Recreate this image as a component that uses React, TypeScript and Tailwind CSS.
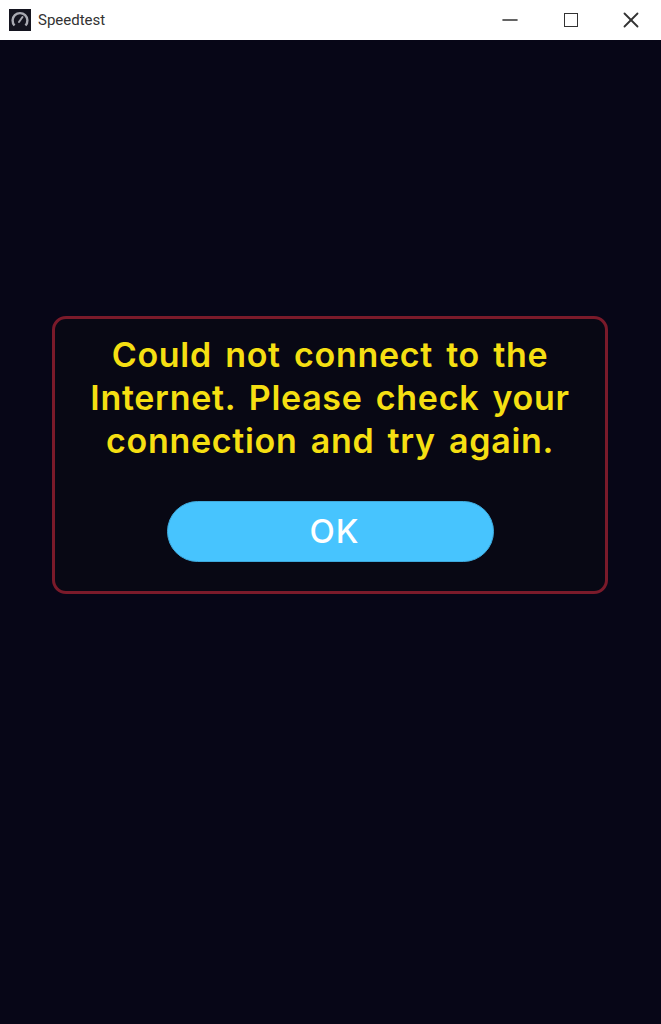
import { Minus, X } from "lucide-react";

function SpeedtestIcon() {
  return (
    <div className="h-[22px] w-[22px] bg-[#14141f]">
      <svg viewBox="0 0 22 22" className="h-[22px] w-[22px]" fill="none">
        <path
          d="M5.5 16.5a7.4 7.4 0 1 1 11 0"
          stroke="#a9aab2"
          strokeWidth="2.4"
          strokeLinecap="butt"
        />
        <path d="M10 13l3.5-5" stroke="#a9aab2" strokeWidth="2" strokeLinecap="round" />
      </svg>
    </div>
  );
}

export default function App() {
  return (
    <div className="flex h-[1024px] w-[661px] flex-col overflow-hidden bg-[#070617] font-['Inter',sans-serif]">
      {/* title bar */}
      <div className="flex h-[40px] items-center justify-between bg-white pl-[9px]">
        <div className="flex items-center gap-[7px]">
          <SpeedtestIcon />
          <span className="font-['Roboto',sans-serif] text-[15px] text-[#333]">Speedtest</span>
        </div>
        <div className="flex items-center">
          <div className="flex w-[61px] justify-center">
            <Minus className="h-[24px] w-[24px] text-[#333]" strokeWidth={1.6} absoluteStrokeWidth />
          </div>
          <div className="flex w-[61px] justify-center">
            <div className="h-[14px] w-[14px] border-[1.6px] border-[#333]" />
          </div>
          <div className="flex w-[60px] justify-center">
            <X className="h-[26px] w-[26px] text-[#333]" strokeWidth={1.7} absoluteStrokeWidth />
          </div>
        </div>
      </div>

      {/* error dialog */}
      <div className="pl-[52px] pt-[276px]">
        <div className="flex h-[278px] w-[556px] flex-col items-center rounded-[14px] border-[3px] border-[#7a1a2a] bg-[#080814] pt-[14px]">
          <p className="w-[530px] text-center text-[34px] leading-[43px] font-semibold tracking-[0.7px] [word-spacing:4px] text-[#f5df12]">
            Could not connect to the
            <br />
            Internet. Please check your
            <br />
            connection and try again.
          </p>
          <button className="mt-[39px] flex h-[61px] w-[327px] items-center justify-center rounded-full border border-[#3ea9dc] bg-[#47c4fe] pl-[9px] text-[33px] font-medium tracking-[1px] text-white">
            OK
          </button>
        </div>
      </div>
    </div>
  );
}
